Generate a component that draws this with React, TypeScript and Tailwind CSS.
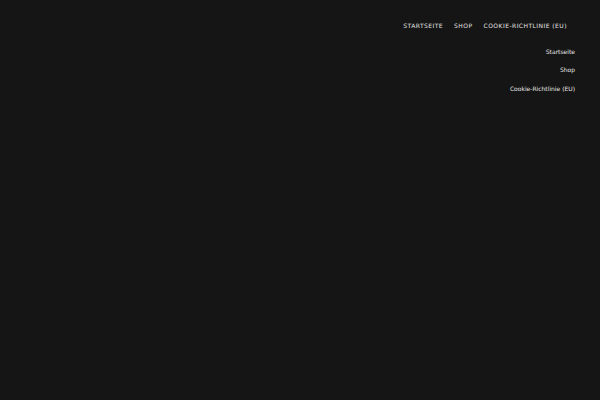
import * as React from "react";

const topLinks = ["Startseite", "Shop", "Cookie-Richtlinie (EU)"];

export default function App() {
  return (
    <div
      className="w-[600px] h-[400px] bg-[#151515] text-[#e6e6e6] overflow-hidden"
      style={{ fontFamily: '"DejaVu Sans", sans-serif' }}
    >
      <header className="flex justify-end pt-[22px] pr-[33px]">
        <nav className="flex gap-[11px]">
          {topLinks.map((l) => (
            <a key={l} className="text-[6px] uppercase tracking-[0.45px] leading-[8px]">
              {l}
            </a>
          ))}
        </nav>
      </header>
      <ul className="flex flex-col items-end gap-[10.3px] pt-[18px] pr-[25px] text-[6px] leading-[8px]">
        {topLinks.map((l) => (
          <li key={l}>{l}</li>
        ))}
      </ul>
    </div>
  );
}
